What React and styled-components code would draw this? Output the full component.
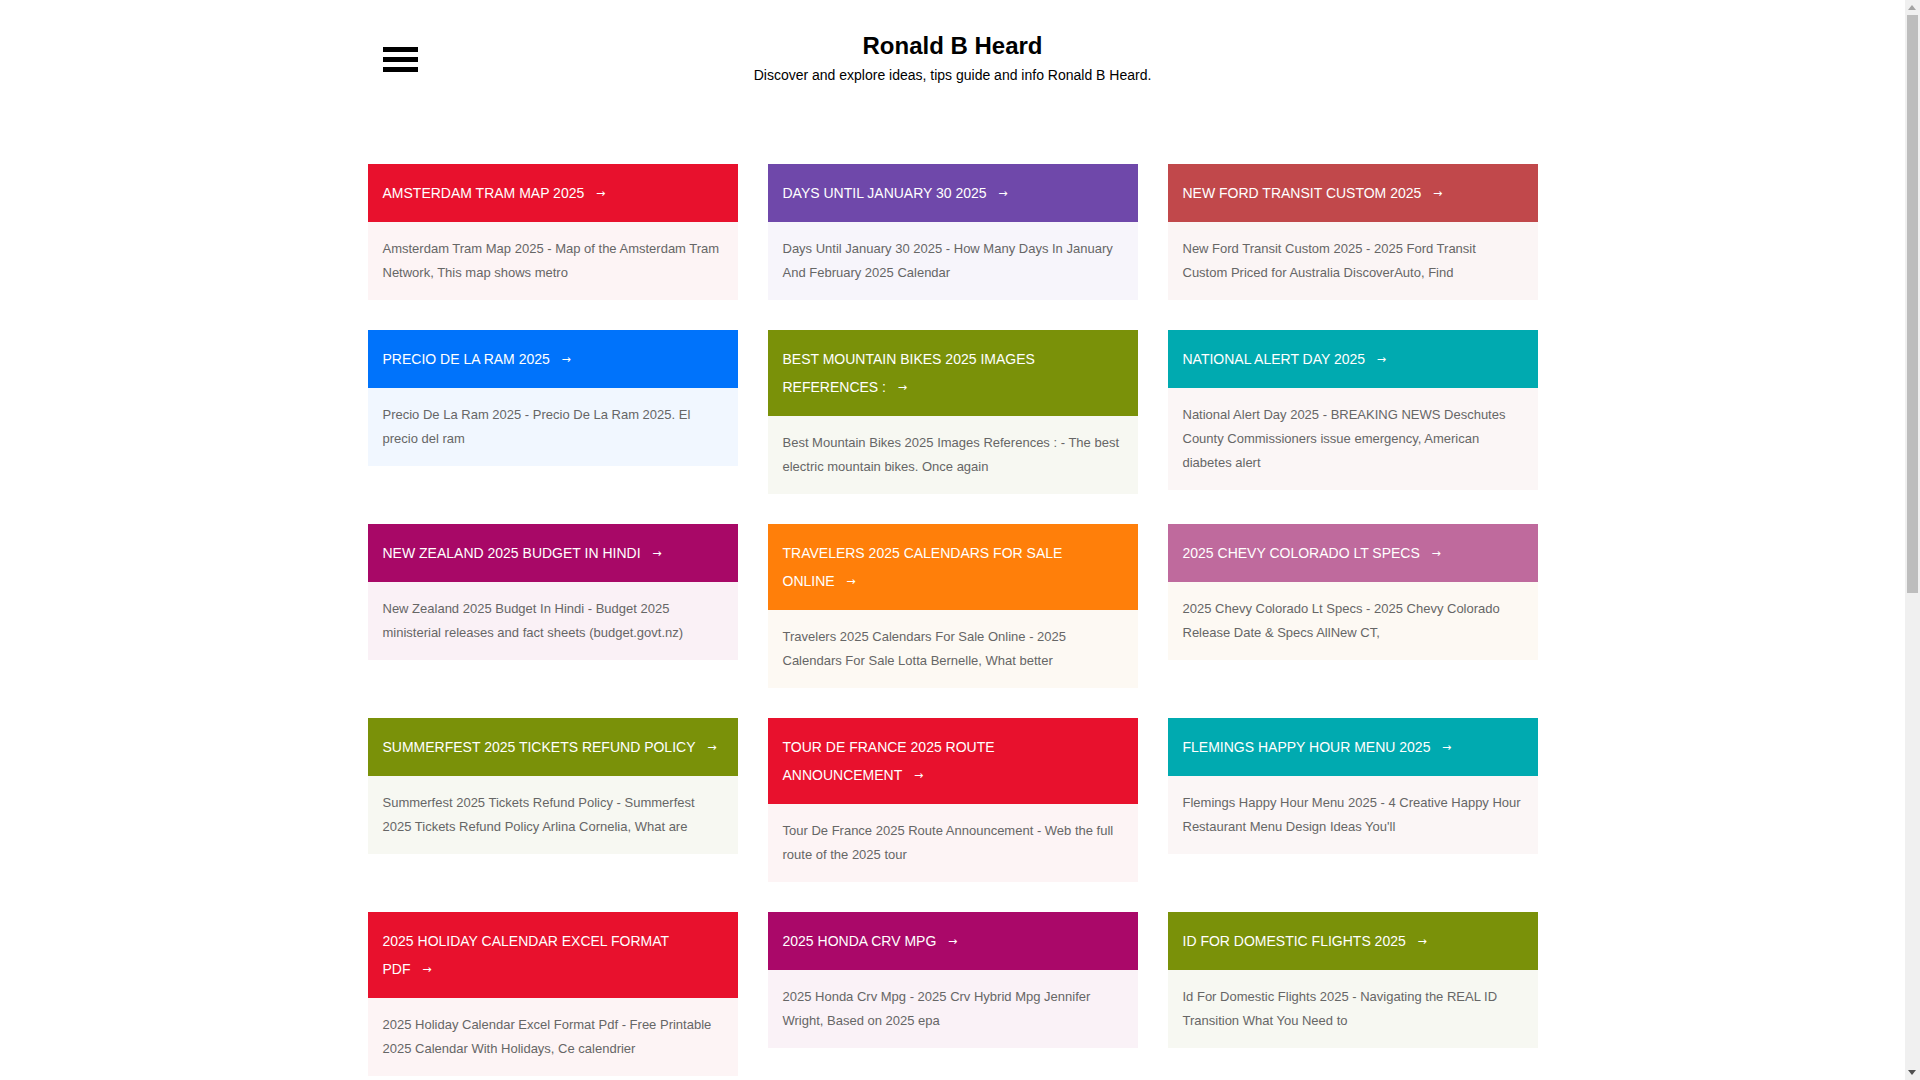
import React from 'react'
import styled, { createGlobalStyle } from 'styled-components'

const GlobalStyle = createGlobalStyle`
  html, body {
    margin: 0;
    padding: 0;
    background: #fff;
  }
  body {
    padding-right: 15px;
    font-family: "Liberation Sans", Arial, sans-serif;
    color: #333;
  }
`

const POSTS = [
  { title: 'Amsterdam Tram Map 2025', excerpt: 'Amsterdam Tram Map 2025 - Map of the Amsterdam Tram Network, This map shows metro', head: '#e8112d', body: '#fdf4f5' },
  { title: 'Days Until January 30 2025', excerpt: 'Days Until January 30 2025 - How Many Days In January And February 2025 Calendar', head: '#6f48aa', body: '#f7f5fb' },
  { title: 'New Ford Transit Custom 2025', excerpt: 'New Ford Transit Custom 2025 - 2025 Ford Transit Custom Priced for Australia DiscoverAuto, Find', head: '#c1484b', body: '#fbf5f5' },
  { title: 'Precio De La Ram 2025', excerpt: 'Precio De La Ram 2025 - Precio De La Ram 2025. El precio del ram', head: '#0073fb', body: '#f1f7ff' },
  { title: 'Best Mountain Bikes 2025 Images References :', excerpt: 'Best Mountain Bikes 2025 Images References : - The best electric mountain bikes. Once again', head: '#7a9109', body: '#f7f8f2' },
  { title: 'National Alert Day 2025', excerpt: 'National Alert Day 2025 - BREAKING NEWS Deschutes County Commissioners issue emergency, American diabetes alert', head: '#00aab0', body: '#fbf6f6' },
  { title: 'New Zealand 2025 Budget In Hindi', excerpt: 'New Zealand 2025 Budget In Hindi - Budget 2025 ministerial releases and fact sheets (budget.govt.nz)', head: '#a80867', body: '#faf1f6' },
  { title: 'Travelers 2025 Calendars For Sale Online', excerpt: 'Travelers 2025 Calendars For Sale Online - 2025 Calendars For Sale Lotta Bernelle, What better', head: '#ff7f0a', body: '#fdf9f3' },
  { title: '2025 Chevy Colorado Lt Specs', excerpt: '2025 Chevy Colorado Lt Specs - 2025 Chevy Colorado Release Date & Specs AllNew CT,', head: '#bf6a9d', body: '#fdf9f3' },
  { title: 'Summerfest 2025 Tickets Refund Policy', excerpt: 'Summerfest 2025 Tickets Refund Policy - Summerfest 2025 Tickets Refund Policy Arlina Cornelia, What are', head: '#7a9109', body: '#f7f8f2' },
  { title: 'Tour De France 2025 Route Announcement', excerpt: 'Tour De France 2025 Route Announcement - Web the full route of the 2025 tour', head: '#e8112d', body: '#fdf4f5' },
  { title: 'Flemings Happy Hour Menu 2025', excerpt: "Flemings Happy Hour Menu 2025 - 4 Creative Happy Hour Restaurant Menu Design Ideas You'll", head: '#00aab0', body: '#fbf6f6' },
  { title: '2025 Holiday Calendar Excel Format Pdf', excerpt: '2025 Holiday Calendar Excel Format Pdf - Free Printable 2025 Calendar With Holidays, Ce calendrier', head: '#e8112d', body: '#fdf4f5' },
  { title: '2025 Honda Crv Mpg', excerpt: '2025 Honda Crv Mpg - 2025 Crv Hybrid Mpg Jennifer Wright, Based on 2025 epa', head: '#aa0869', body: '#faf2f7' },
  { title: 'Id For Domestic Flights 2025', excerpt: 'Id For Domestic Flights 2025 - Navigating the REAL ID Transition What You Need to', head: '#7a9109', body: '#f7f8f2' },
]

const Container = styled.div`
  width: 1170px;
  margin: 0 auto;
  padding: 0 15px;
  box-sizing: border-box;
`

const Header = styled.header`
  display: grid;
  grid-template-columns: 1fr auto 1fr;
  align-items: start;
  padding-top: 33px;
  margin-bottom: 79px;
`

const MenuButton = styled.button`
  display: flex;
  flex-direction: column;
  gap: 5px;
  width: 35px;
  margin-top: 14px;
  padding: 0;
  border: 0;
  background: none;
  cursor: pointer;
`

const MenuBar = styled.span`
  display: block;
  height: 5px;
  background: #000;
`

const Brand = styled.div`
  text-align: center;
`

const SiteTitle = styled.h1`
  margin: 0;
  font-size: 24px;
  line-height: 26px;
  font-weight: bold;
  color: #000;
`

const Tagline = styled.p`
  margin: 6px 0 0;
  font-size: 14px;
  line-height: 20px;
  color: #000;
`

const Grid = styled.main`
  display: grid;
  grid-template-columns: repeat(3, 370px);
  column-gap: 30px;
  row-gap: 30px;
  align-items: start;
  margin: 0 -15px 30px;
`

const Card = styled.article`
  background: ${props => props.$tint};
`

const CardHead = styled.h2`
  margin: 0;
  padding: 15px;
  background: ${props => props.$color};
  color: #fff;
  font-size: 14px;
  line-height: 28px;
  font-weight: normal;
  text-transform: uppercase;
`

const Arrow = styled.span`
  padding-right: 4px;
  font-family: "DejaVu Sans", sans-serif;
  font-size: 11px;
  line-height: 1;
  vertical-align: 1px;
`

const CardText = styled.p`
  margin: 0;
  padding: 15px;
  font-size: 13px;
  line-height: 24px;
  color: #666;
`

/* the window's scrollbar, as the reference shows it */
const ScrollTrack = styled.div`
  position: fixed;
  top: 0;
  right: 0;
  bottom: 0;
  width: 15px;
  background: #f0f0f0;
`

const ScrollThumb = styled.div`
  position: absolute;
  top: 15px;
  left: 2px;
  width: 11px;
  height: 578px;
  background: #bdbdbd;
`

const ScrollArrow = styled.span`
  position: absolute;
  left: 3px;
  ${props => (props.$down ? 'bottom: 5px;' : 'top: 5px;')}
  border-left: 4.5px solid transparent;
  border-right: 4.5px solid transparent;
  ${props => (props.$down
    ? 'border-top: 5px solid #505050;'
    : 'border-bottom: 5px solid #a3a3a3;')}
`

const PostCard = ({ title, excerpt, head, body }) => (
  <Card $tint={body}>
    <CardHead $color={head}>
      {title}{'\u00a0\u00a0\u00a0'}<Arrow>→</Arrow>
    </CardHead>
    <CardText>{excerpt}</CardText>
  </Card>
)

export default function App() {
  return (
    <>
      <GlobalStyle />
      <Container>
        <Header>
          <MenuButton aria-label="Menu">
            <MenuBar />
            <MenuBar />
            <MenuBar />
          </MenuButton>
          <Brand>
            <SiteTitle>Ronald B Heard</SiteTitle>
            <Tagline>Discover and explore ideas, tips guide and info Ronald B Heard.</Tagline>
          </Brand>
          <div />
        </Header>
        <Grid>
          {POSTS.map(post => <PostCard key={post.title} {...post} />)}
        </Grid>
      </Container>
      <ScrollTrack aria-hidden="true">
        <ScrollArrow />
        <ScrollThumb />
        <ScrollArrow $down />
      </ScrollTrack>
    </>
  )
}
